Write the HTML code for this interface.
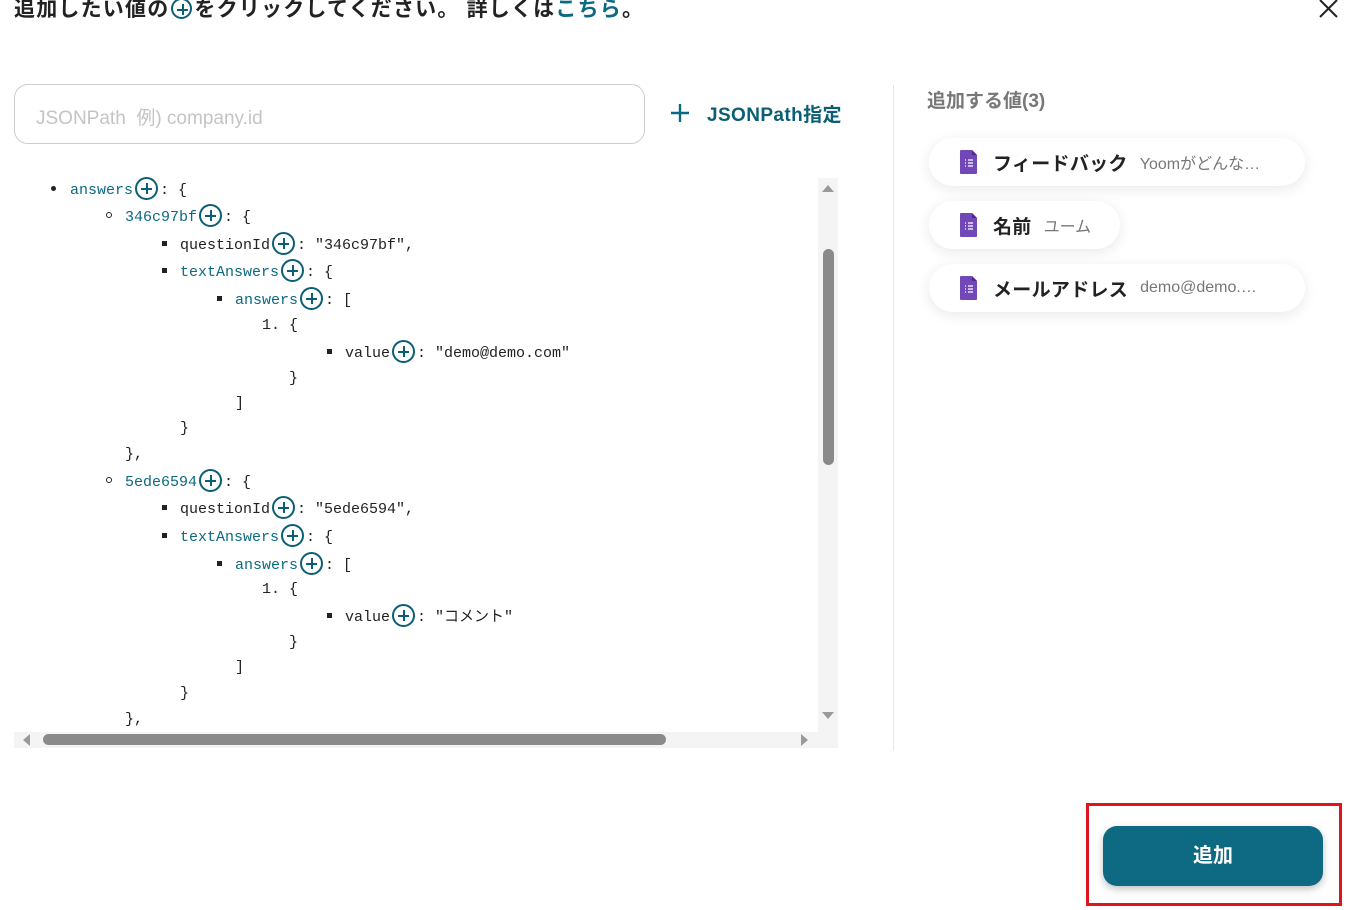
<!DOCTYPE html>
<html><head><meta charset="utf-8"><style>
body{margin:0;width:1349px;height:910px;background:#fff;position:relative;overflow:hidden;font-family:"Liberation Sans","Noto Sans CJK JP",sans-serif;}
.a{position:absolute;white-space:nowrap}
.t{font-family:"Liberation Mono","Noto Sans CJK JP",monospace;font-size:15px;color:#222;line-height:20px}
.k{color:#0b6a82}
.p{display:inline-block;width:19px;height:19px;border:2px solid #0b5f75;border-radius:50%;vertical-align:-6px;position:relative;margin:0 2px 0 2px}
.p:before{content:"";position:absolute;left:4px;top:8.5px;width:11px;height:2px;background:#0b5f75}
.p:after{content:"";position:absolute;left:8.5px;top:4px;width:2px;height:11px;background:#0b5f75}
.d{position:absolute;width:5px;height:5px;background:#222}
.chip{position:absolute;left:929px;height:48px;background:#fff;border-radius:24px;box-shadow:0 3px 14px rgba(0,0,0,.09);display:flex;align-items:center}
.chip b{font-size:19px;color:#222;margin-left:16px;letter-spacing:.3px}
.chip span{font-size:16px;color:#777;margin-left:12px}
.ic{margin-left:31px;width:17px;height:24px}
</style></head><body>
<div class="a" style="left:14px;top:-7px;font-size:21px;font-weight:bold;color:#222;letter-spacing:1.2px">追加したい値の<span class="p" style="width:17px;height:17px;vertical-align:-3px"></span>をクリックしてください。 詳しくは<span style="color:#0b6a82">こちら</span>。</div>
<svg class="a" style="left:1318px;top:0" width="22" height="18"><path d="M2 0L19 17M19 0L2 17" stroke="#222" stroke-width="2"/></svg>
<div class="a" style="left:14px;top:84px;width:631px;height:60px;border:1px solid #ccc;border-radius:14px;box-sizing:border-box"></div>
<div class="a" style="left:36px;top:103px;font-size:19px;color:#c4c4c4">JSONPath&nbsp; 例) company.id</div>
<svg class="a" style="left:670px;top:103px" width="20" height="20"><path d="M10 1V19M1 10H19" stroke="#0b6a82" stroke-width="2.4"/></svg>
<div class="a" style="left:707px;top:100px;font-size:19px;font-weight:bold;color:#0b5f75;letter-spacing:.4px">JSONPath指定</div>
<div class="a" style="left:893px;top:85px;width:1px;height:666px;background:#e6e6e6"></div>

<div class="a" style="left:14px;top:175px;width:824px;height:575px;background:#fff"></div>
<div class="a" style="left:818px;top:178px;width:20px;height:555px;background:#f4f4f4"></div>
<div class="a" style="left:823px;top:249px;width:11px;height:216px;background:#8a8a8a;border-radius:6px"></div>
<div class="a" style="left:822px;top:185px;width:0;height:0;border:6px solid transparent;border-bottom:7px solid #999;border-top:0"></div>
<div class="a" style="left:822px;top:712px;width:0;height:0;border:6px solid transparent;border-top:7px solid #999;border-bottom:0"></div>
<div class="a" style="left:14px;top:732px;width:824px;height:16px;background:#f4f4f4"></div>
<div class="a" style="left:43px;top:734px;width:623px;height:11px;background:#8a8a8a;border-radius:6px"></div>
<div class="a" style="left:23px;top:734px;width:0;height:0;border:6px solid transparent;border-right:7px solid #999;border-left:0"></div>
<div class="a" style="left:801px;top:734px;width:0;height:0;border:6px solid transparent;border-left:7px solid #999;border-right:0"></div>

<div class="a" style="left:51px;top:186px;width:5px;height:5px;border-radius:50%;background:#222"></div>
<div class="a t" style="left:70px;top:177px"><span class="k">answers</span><span class="p"></span>: {</div>
<div class="a" style="left:106px;top:212px;width:4px;height:4px;border:1px solid #222;border-radius:50%"></div>
<div class="a t" style="left:125px;top:204px"><span class="k">346c97bf</span><span class="p"></span>: {</div>
<div class="d" style="left:162px;top:241px"></div>
<div class="a t" style="left:180px;top:232px">questionId<span class="p"></span>: "346c97bf",</div>
<div class="d" style="left:162px;top:268px"></div>
<div class="a t" style="left:180px;top:259px"><span class="k">textAnswers</span><span class="p"></span>: {</div>
<div class="d" style="left:217px;top:296px"></div>
<div class="a t" style="left:235px;top:287px"><span class="k">answers</span><span class="p"></span>: [</div>
<div class="a t" style="left:262px;top:316px">1. {</div>
<div class="d" style="left:327px;top:349px"></div>
<div class="a t" style="left:345px;top:340px">value<span class="p"></span>: "demo@demo.com"</div>
<div class="a t" style="left:289px;top:369px">}</div>
<div class="a t" style="left:235px;top:394px">]</div>
<div class="a t" style="left:180px;top:419px">}</div>
<div class="a t" style="left:125px;top:445px">},</div>
<div class="a" style="left:106px;top:477px;width:4px;height:4px;border:1px solid #222;border-radius:50%"></div>
<div class="a t" style="left:125px;top:469px"><span class="k">5ede6594</span><span class="p"></span>: {</div>
<div class="d" style="left:162px;top:505px"></div>
<div class="a t" style="left:180px;top:496px">questionId<span class="p"></span>: "5ede6594",</div>
<div class="d" style="left:162px;top:533px"></div>
<div class="a t" style="left:180px;top:524px"><span class="k">textAnswers</span><span class="p"></span>: {</div>
<div class="d" style="left:217px;top:561px"></div>
<div class="a t" style="left:235px;top:552px"><span class="k">answers</span><span class="p"></span>: [</div>
<div class="a t" style="left:262px;top:580px">1. {</div>
<div class="d" style="left:327px;top:613px"></div>
<div class="a t" style="left:345px;top:604px">value<span class="p"></span>: "コメント"</div>
<div class="a t" style="left:289px;top:633px">}</div>
<div class="a t" style="left:235px;top:658px">]</div>
<div class="a t" style="left:180px;top:684px">}</div>
<div class="a t" style="left:125px;top:710px">},</div>

<div class="a" style="left:927px;top:86px;font-size:19px;font-weight:bold;color:#777">追加する値(3)</div>
<div class="chip" style="top:138px;width:376px"><svg class="ic" viewBox="0 0 17 24"><path d="M0 1Q0 0 1 0H12L17 5V23Q17 24 16 24H1Q0 24 0 23Z" fill="#7248b9"/><path d="M12 0V5H17Z" fill="#4e2a8f"/><path d="M5 10h1M8 10h5M5 13h1M8 13h5M5 16h1M8 16h5" stroke="#fff" stroke-width="1.3"/></svg><b>フィードバック</b><span>Yoomがどんな…</span></div>
<div class="chip" style="top:201px;width:191px"><svg class="ic" viewBox="0 0 17 24"><path d="M0 1Q0 0 1 0H12L17 5V23Q17 24 16 24H1Q0 24 0 23Z" fill="#7248b9"/><path d="M12 0V5H17Z" fill="#4e2a8f"/><path d="M5 10h1M8 10h5M5 13h1M8 13h5M5 16h1M8 16h5" stroke="#fff" stroke-width="1.3"/></svg><b>名前</b><span>ユーム</span></div>
<div class="chip" style="top:264px;width:376px"><svg class="ic" viewBox="0 0 17 24"><path d="M0 1Q0 0 1 0H12L17 5V23Q17 24 16 24H1Q0 24 0 23Z" fill="#7248b9"/><path d="M12 0V5H17Z" fill="#4e2a8f"/><path d="M5 10h1M8 10h5M5 13h1M8 13h5M5 16h1M8 16h5" stroke="#fff" stroke-width="1.3"/></svg><b>メールアドレス</b><span>demo@demo.…</span></div>

<div class="a" style="left:1086px;top:803px;width:256px;height:103px;border:3px solid #e0141e;box-sizing:border-box"></div>
<div class="a" style="left:1103px;top:826px;width:220px;height:60px;background:#0e6a83;border-radius:14px;box-shadow:0 3px 8px rgba(0,0,0,.25);color:#fff;font-size:20px;font-weight:bold;text-align:center;line-height:60px">追加</div>
</body></html>
